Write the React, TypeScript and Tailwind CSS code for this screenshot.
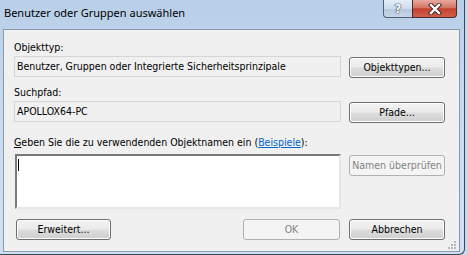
import React from "react";

const dlg = "font-['DejaVu_Sans_Condensed','Liberation_Sans',Arial,sans-serif] text-[10.5px] leading-[13px] text-[#000]";

function Btn({ w, children, disabled }: { w: string; children: React.ReactNode; disabled?: boolean }) {
  if (disabled) {
    return (
      <div
        className={`${w} h-[21px] rounded-[3px] border border-[#adb2b5] bg-[#f4f4f4] flex items-center justify-center text-[#838383]`}
      >
        {children}
      </div>
    );
  }
  return (
    <div
      className={`${w} h-[21px] rounded-[3px] border border-[#707070] bg-[linear-gradient(to_bottom,#f2f2f2_0%,#ebebeb_48%,#dddddd_52%,#cfcfcf_100%)] shadow-[inset_0_0_0_1px_#fcfcfc] flex items-center justify-center`}
    >
      {children}
    </div>
  );
}

export default function App() {
  return (
    <div className="w-[467px] h-[255px] bg-[#c9d9ea] overflow-hidden">
      <div className="w-[465px] h-[255px] border-r border-b border-[#3a4656] rounded-br-[6px] bg-[linear-gradient(to_bottom,#b8cfe8_0%,#c6daef_40%,#cfe0f2_100%)] flex flex-col">
        {/* Title bar */}
        <div className="h-[29px] flex items-start shrink-0">
          <div className="pl-[4px] pt-[5px] font-['Noto_Sans',sans-serif] text-[11px] leading-[15px] text-[#000]">
            Benutzer oder Gruppen auswählen
          </div>
          <div className="flex-1" />
          <div className="flex mr-[7px]">
            <div className="w-[29px] h-[18px] border border-t-0 border-r-0 border-[#4f5f74] rounded-bl-[4px] bg-[linear-gradient(to_bottom,#e4edf7_0%,#cfdcec_50%,#b5c7dc_51%,#c7d7e9_100%)] flex items-center justify-center">
              <span className="font-['DejaVu_Sans',sans-serif] font-bold text-[12px] leading-[12px] text-white [text-shadow:0_0_1px_#2c3a4c,0_0_1px_#2c3a4c,0_0_1px_#2c3a4c]">
                ?
              </span>
            </div>
            <div className="w-[45px] h-[18px] border border-t-0 border-[#4a2a2a] rounded-br-[4px] bg-[linear-gradient(to_bottom,#e8a99e_0%,#d47565_45%,#c2402e_52%,#d0604a_100%)] flex items-center justify-center">
              <svg width="14" height="12" viewBox="0 0 14 12">
                <path d="M3 2 L11 10 M11 2 L3 10" stroke="#3c2020" strokeWidth="4.2" strokeLinecap="square" />
                <path d="M3 2 L11 10 M11 2 L3 10" stroke="#ffffff" strokeWidth="2.4" strokeLinecap="square" />
              </svg>
            </div>
          </div>
        </div>

        {/* Client area */}
        <div className={`${dlg} ml-[3px] w-[457px] h-[223px] border border-[#8a99ab] bg-[#f0f0f0] pl-[10px] pt-[11px] relative`}>
          <div>Objekttyp:</div>
          <div className="flex items-start mt-[2px]">
            <div className="w-[327px] h-[21px] border border-[#d5d5d5] bg-[#f0f0f0] flex items-center pl-[2px]">
              Benutzer, Gruppen oder Integrierte Sicherheitsprinzipale
            </div>
            <div className="ml-[8px] mt-[1px]">
              <Btn w="w-[96px]">Objekttypen...</Btn>
            </div>
          </div>

          <div className="mt-[8px]">Suchpfad:</div>
          <div className="flex items-start mt-[2px]">
            <div className="w-[327px] h-[21px] border border-[#d5d5d5] bg-[#f0f0f0] flex items-center pl-[2px]">
              APOLLOX64-PC
            </div>
            <div className="ml-[8px] mt-[1px]">
              <Btn w="w-[96px]">Pfade...</Btn>
            </div>
          </div>

          <div className="mt-[13px]">
            <span className="underline">G</span>eben Sie die zu verwendenden Objektnamen ein (
            <span className="text-[#0066cc] underline">Beispiele</span>):
          </div>
          <div className="flex items-start mt-[5px]">
            <div className="ml-[1px] w-[326px] h-[55px] border-2 border-t-[#7a7a7a] border-l-[#7a7a7a] border-b-[#e6e6e6] border-r-[#e6e6e6] bg-white pl-[1px] pt-[3px]">
              <div className="w-[1px] h-[12px] bg-black" />
            </div>
            <div className="ml-[8px] mt-[1px]">
              <Btn w="w-[96px]" disabled>
                Namen überprüfen
              </Btn>
            </div>
          </div>

          <div className="flex items-start mt-[10px]">
            <div className="ml-[2px]">
              <Btn w="w-[95px]">Erweitert...</Btn>
            </div>
            <div className="ml-[132px]">
              <Btn w="w-[97px]" disabled>
                OK
              </Btn>
            </div>
            <div className="ml-[9px]">
              <Btn w="w-[96px]">Abbrechen</Btn>
            </div>
          </div>

          <svg className="absolute right-[2px] bottom-[1px]" width="10" height="10" viewBox="0 0 10 10">
            <g fill="#b8b8b8">
              <rect x="7" y="1" width="2" height="2" />
              <rect x="4" y="4" width="2" height="2" />
              <rect x="7" y="4" width="2" height="2" />
              <rect x="1" y="7" width="2" height="2" />
              <rect x="4" y="7" width="2" height="2" />
              <rect x="7" y="7" width="2" height="2" />
            </g>
          </svg>
        </div>
      </div>
    </div>
  );
}
